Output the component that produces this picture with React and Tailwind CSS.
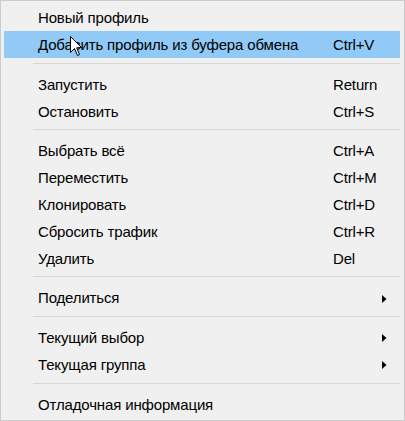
import React from 'react';

const groups = [
  [
    { label: 'Новый профиль' },
    { label: 'Добавить профиль из буфера обмена', shortcut: 'Ctrl+V', active: true },
  ],
  [
    { label: 'Запустить', shortcut: 'Return' },
    { label: 'Остановить', shortcut: 'Ctrl+S' },
  ],
  [
    { label: 'Выбрать всё', shortcut: 'Ctrl+A' },
    { label: 'Переместить', shortcut: 'Ctrl+M' },
    { label: 'Клонировать', shortcut: 'Ctrl+D' },
    { label: 'Сбросить трафик', shortcut: 'Ctrl+R' },
    { label: 'Удалить', shortcut: 'Del' },
  ],
  [{ label: 'Поделиться', sub: true }],
  [
    { label: 'Текущий выбор', sub: true },
    { label: 'Текущая группа', sub: true },
  ],
  [{ label: 'Отладочная информация' }],
];

function Arrow() {
  return (
    <svg width="5" height="8" viewBox="0 0 5 8" className="ml-[49px]">
      <polygon points="0,0 4.5,4 0,8" fill="#000" />
    </svg>
  );
}

function Cursor() {
  return (
    <svg
      width="13"
      height="21"
      viewBox="0 0 13 21"
      className="absolute left-[69px] top-[35px] pointer-events-none"
    >
      <path
        d="M0.5,0.5 L0.5,16.5 L4.5,12.5 L7.5,19.5 L9.5,18.5 L6.7,11.8 L11.5,11.5 Z"
        fill="#fff"
        stroke="#000"
        strokeWidth="1"
        strokeLinejoin="miter"
      />
    </svg>
  );
}

export default function App() {
  return (
    <div
      className="relative w-[405px] h-[421px] bg-[#f0f0f0] border border-[#cccccc] pt-[3px] pl-[3px] pr-[4px] text-[15px] tracking-[-0.15px] text-black"
      style={{ fontFamily: '"Liberation Sans", Arial, sans-serif' }}
    >
      {groups.map((items, gi) => (
        <div key={gi}>
          {gi > 0 && (
            <div className="pt-[5px] pb-[7px]">
              <div className="ml-[29px] h-px bg-[#d7d7d7]" />
            </div>
          )}
          {items.map((item) => (
            <div
              key={item.label}
              className={`flex items-center h-[26.8px] pl-[34px] pt-[2px] ${
                item.active ? 'bg-[#91c9f7]' : ''
              }`}
            >
              <span className="flex-1 whitespace-nowrap">{item.label}</span>
              <span className="w-[67px] flex items-center whitespace-nowrap">
                {item.shortcut}
                {item.sub && <Arrow />}
              </span>
            </div>
          ))}
        </div>
      ))}
      <Cursor />
    </div>
  );
}
